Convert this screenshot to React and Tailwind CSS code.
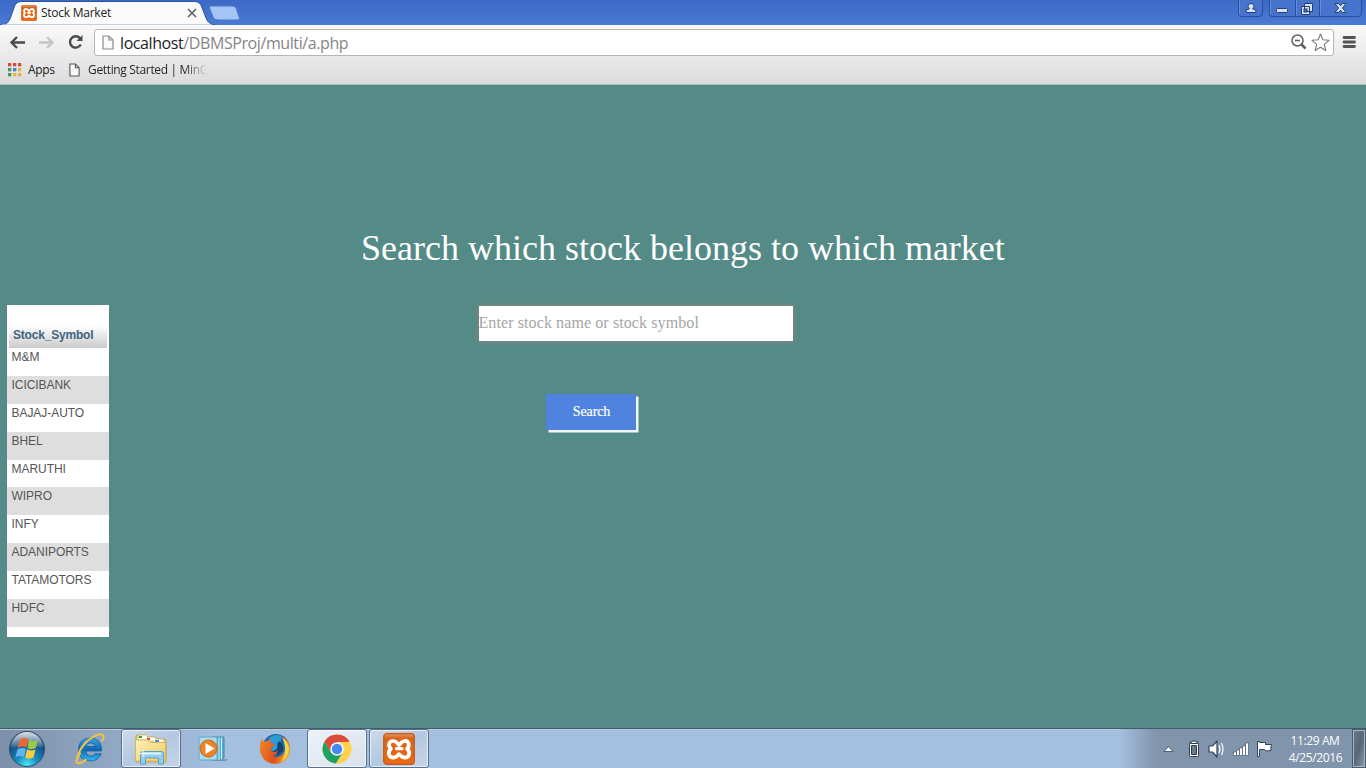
import React from 'react';

const symbols = ['M&M', 'ICICIBANK', 'BAJAJ-AUTO', 'BHEL', 'MARUTHI', 'WIPRO', 'INFY', 'ADANIPORTS', 'TATAMOTORS', 'HDFC'];

function XamppIcon({ className }) {
  return (
    <svg viewBox="0 0 32 32" className={className}>
      <defs>
        <linearGradient id="xampp" x1="0" y1="0" x2="0" y2="1">
          <stop offset="0" stopColor="#e89a62" />
          <stop offset="0.14" stopColor="#d9661d" />
          <stop offset="1" stopColor="#ea6a10" />
        </linearGradient>
      </defs>
      <rect x="0.7" y="0.7" width="30.6" height="30.6" rx="3" fill="url(#xampp)" stroke="#c45a18" strokeWidth="1.2" />
      <g fill="none" stroke="#fff" strokeWidth="3.7" strokeLinejoin="round" strokeLinecap="round">
        <path d="M11.500 8.200c-5.200-1.200-7.200 4.200-3.600 7.600-4 3.400-2 9.600 3.600 8.600 2.700-.5 3.200-2.300 4.600-3.300 1.200 1 1.900 2.800 4.600 3.300 5.400 1 7.400-5.200 3.400-8.600 3.400-3.400 1.400-8.800-3.400-7.600-2.500.5-3 2.500-4.600 4-1.400-1.500-2-3.400-4.600-4z" />
        <path d="M13.500 15.700h5.500" strokeWidth="3.200" />
      </g>
    </svg>
  );
}

function PageIcon({ stroke = '#555', className }) {
  return (
    <svg viewBox="0 0 12 15" className={className} fill="none" stroke={stroke} strokeWidth="1.2">
      <path d="M1 1h6l4 4v9H1z" fill="#fafafa" />
      <path d="M7 1v4h4" />
    </svg>
  );
}

function TabStrip() {
  return (
    <div className="relative flex h-[25px] bg-linear-to-b from-[#3c69c5] to-[#4a7ad3]">
      <svg className="absolute left-0 top-0" width="250" height="25">
        <path d="M0 25C6 25 8 23 10 19L15 5Q17 1.500 21 1.500H195Q199 1.500 201 5L206 18Q209 25 215 25Z" fill="#fafafa" stroke="#2c52a2" />
        <rect x="2" y="24.500" width="210" height="1" fill="#f6f6f6" />
        <path d="M210.500 6H232Q235 6 236 8L239.500 18Q240 20 237 20H218Q214.500 20 213.500 18L209.500 8Q209 6 211 6Z" fill="#a3c4f4" stroke="#4a78cc" />
      </svg>
      <div className="relative flex h-[25px] w-[204px] items-center pl-[21px]">
        <XamppIcon className="h-4 w-4" />
        <span className="ml-1 w-[142px] whitespace-nowrap text-[12px] tracking-[-0.25px] text-[#222]">Stock Market</span>
        <svg width="10" height="10" viewBox="0 0 10 10" className="ml-[4px]" stroke="#666" strokeWidth="1.700"><path d="M1 1l8 8M9 1L1 9" /></svg>
      </div>
      <svg className="ml-auto" width="130" height="18" viewBox="0 0 130 18">
        <g fill="#4674cd" stroke="#274d9c">
          <path d="M2.500-1V13q0 3.500 3 3.500H23q3.500 0 3.500-3.500V-1" />
          <path d="M33.500-1V13q0 3.500 3 3.500H112q3.500 0 3.500-3.500V-1" transform="translate(0 0)" />
          <path d="M33.500-1V13q0 3.500 3 3.500H122q3.500 0 3.500-3.500V-1M59.500 0V16M83.500 0V16" />
        </g>
        <g fill="none" stroke="#7398dd" strokeOpacity="0.700">
          <path d="M3.500 0V15M34.500 0V15M60.500 0V15M84.500 0V15" />
        </g>
        <g fill="#d5e2fa" stroke="#273f6d">
          <path d="M13.200 8.200q-1.200-1-1.200-2 0-2.700 3-2.700t3 2.700q0 1-1.200 2v.8l3 .8v2.700h-9.600V9.800l3-.8z" />
          <rect x="40.500" y="8.500" width="11" height="4" rx="1" />
          <path d="M68.500 3.500h8v8h-8zM65.500 6.500h8v8h-8z" />
          <rect x="68" y="9" width="3" height="3" fill="#4674cd" />
          <path d="M99 3.500h3.500l2 2.300 2-2.300h3.500l-3.500 4.500 3.500 4.500h-3.500l-2-2.300-2 2.300H99l3.500-4.500z" />
        </g>
      </svg>
    </div>
  );
}

function AppsGrid() {
  const colors = ['#d64a3c', '#d64a3c', '#d64a3c', '#3d9a5a', '#4a80da', '#e9b23c', '#3d9a5a', '#e9b23c', '#e9b23c'];
  return (
    <svg width="14" height="14" viewBox="0 0 14 14">
      {colors.map((c, i) => <rect key={i} x={(i % 3) * 5} y={Math.floor(i / 3) * 5} width="3.300" height="3.300" fill={c} />)}
    </svg>
  );
}

function Toolbar() {
  return (
    <div className="flex h-[60px] flex-col border-b border-[#b5bcb9] bg-linear-to-b from-[#f9f9f9] to-[#dcdcdc]">
      <div className="flex h-[34px] items-center pl-[9px]">
        <svg width="78" height="18" viewBox="0 0 78 18" fill="none">
          <path d="M16 9.500H2.500M8 4L2.500 9.500 8 15" stroke="#4b4b4b" strokeWidth="2.400" />
          <path d="M30 9.500h13.500M38 4l5.500 5.500L38 15" stroke="#c6c6c6" strokeWidth="2.400" />
          <path d="M71 5.200A5.700 5.700 0 1 0 71.800 11.500" stroke="#4b4b4b" strokeWidth="2.400" />
          <path d="M73.500 2v6h-6z" fill="#4b4b4b" />
        </svg>
        <div className="ml-[7px] flex h-[27px] w-[1240px] items-center rounded-[3px] border border-[#b6b6b6] bg-white pl-[7px]">
          <PageIcon stroke="#8c8c8c" className="h-[15px] w-[12px]" />
          <span className="ml-[6px] whitespace-nowrap pt-px text-[16px] tracking-[-0.41px] text-[#858585]"><span className="text-[#222]">localhost</span>/DBMSProj/multi/a.php</span>
          <svg className="ml-auto mr-[2px]" width="41" height="20" viewBox="0 0 41 20" fill="none">
            <circle cx="7.500" cy="8.500" r="5.500" stroke="#5f5f5f" strokeWidth="1.500" />
            <path d="M5 8.500h5" stroke="#5f5f5f" strokeWidth="1.500" />
            <path d="M11.500 12.500l4 4" stroke="#5f5f5f" strokeWidth="2.500" />
            <path d="M30.500 2l2.300 5.800 6.200.5-4.700 4.100 1.500 6.100-5.300-3.300-5.300 3.300 1.500-6.100-4.700-4.100 6.200-.5z" stroke="#777" strokeWidth="1.100" strokeLinejoin="round" />
          </svg>
        </div>
        <svg className="ml-[8px]" width="14" height="14" viewBox="0 0 14 14"><path d="M2 2.500h10.500M2 7h10.500M2 11.500h10.500" stroke="#555" strokeWidth="2.800" strokeLinecap="round" /></svg>
      </div>
      <div className="flex h-[22px] items-center pl-[8px] text-[12px] text-[#222]">
        <AppsGrid />
        <span className="ml-[6px] w-[41px] tracking-[-0.3px]">Apps</span>
        <PageIcon className="h-[14px] w-[11px]" />
        <span className="ml-[8px] w-[118px] overflow-hidden whitespace-nowrap bg-linear-to-r from-[#222] from-82% to-[#22222210] bg-clip-text tracking-[-0.34px] text-transparent">Getting Started | MinG</span>
      </div>
    </div>
  );
}

function StockList() {
  return (
    <aside className="mt-[220px] h-[332px] w-[102px] bg-white pt-[21px] font-['Liberation_Sans',sans-serif]">
      <div className="ml-[2px] mr-[2px] h-[22px] bg-linear-to-b from-white to-[#cbcbcb] pl-[4px] text-[12px] font-bold leading-[18px] tracking-[-0.2px] text-[#3d6480]">Stock_Symbol</div>
      {symbols.map((s, i) => (
        <div key={s} className={`h-[27.9px] pl-[4.500px] text-[12px] leading-[19px] tracking-[-0.05px] text-[#555] ${i % 2 ? 'bg-[#dedede]' : 'bg-white'}`}>{s}</div>
      ))}
    </aside>
  );
}

function StartOrb() {
  return (
    <svg width="38" height="38" viewBox="0 0 38 38">
      <defs>
        <radialGradient id="orb" cx="0.500" cy="0.950" r="0.900">
          <stop offset="0" stopColor="#4fe6f5" /><stop offset="0.350" stopColor="#168bc0" /><stop offset="0.750" stopColor="#154d80" /><stop offset="1" stopColor="#58748d" />
        </radialGradient>
        <linearGradient id="shine" x1="0" y1="0" x2="0" y2="1"><stop offset="0" stopColor="#fff" stopOpacity="0.750" /><stop offset="1" stopColor="#fff" stopOpacity="0.100" /></linearGradient>
      </defs>
      <circle cx="19" cy="19" r="17.500" fill="url(#orb)" stroke="#33506d" />
      <path d="M3 18a16 16 0 0 1 32 0q-16-5-32 0z" fill="url(#shine)" />
      <path d="M12 9.500q4-2.500 8.300-.5l-2 8.500q-4.300-2-8.500.5z" fill="#ed662b" />
      <path d="M21.500 9.800q4 2.500 8.500.3L27.800 18q-4.500 2.200-8.300-.1z" fill="#9acb45" />
      <path d="M9.500 19.500q4.200-2.500 8.400-.5l-2 8q-4.300-2-8.500.500z" fill="#64b5ed" />
      <path d="M19.200 19.300q4 2.300 8.300.2l-2 8q-4.400 2.200-8.400-.1z" fill="#fccc3d" />
    </svg>
  );
}

function IeIcon() {
  return (
    <svg width="34" height="34" viewBox="0 0 34 34" fill="none">
      <defs><linearGradient id="ie" x1="0" y1="0" x2="0" y2="1"><stop stopColor="#3fa4e4" /><stop offset="0.500" stopColor="#0c68b4" /><stop offset="1" stopColor="#35b7ef" /></linearGradient></defs>
      <path d="M29.500 19H14q.4 5 5 5 2.700 0 4.100-2.200h6.200Q26.300 29 18.400 29 6.500 28.500 6.500 17.500T18.500 6q11.500.5 11 13zM14 14.500h9.300q-.7-3.500-4.700-3.500T14 14.500z" fill="url(#ie)" stroke="#12589a" strokeWidth="0.700" />
      <path d="M8 21.500C1 32 5.500 34 13.500 28M5 26C8 15 17 5 27 2.500c5-1 5.500 2 3.300 6" stroke="#edc144" strokeWidth="2.200" strokeLinecap="round" />
    </svg>
  );
}

function ExplorerIcon() {
  return (
    <svg width="34" height="32" viewBox="0 0 34 32">
      <defs><linearGradient id="folder" x1="0" y1="0" x2="1" y2="1"><stop stopColor="#fff3b6" /><stop offset="1" stopColor="#ebc967" /></linearGradient></defs>
      <path d="M2 29V4q0-2 2-2h8l2 2h7l2 2h7q2 0 2 2v21z" fill="#ecd27d" stroke="#c4a44d" />
      <path d="M5 2.500h8v4H5z" fill="#fff" /><path d="M5 3h3v2H5z" fill="#29a244" />
      <path d="M12 4.500h9v3h-9z" fill="#fff" /><path d="M13 5h3v2h-3z" fill="#dd4939" />
      <path d="M20 6.500h9v3h-9z" fill="#fff" /><path d="M21 7h4v2h-4z" fill="#3c91da" />
      <path d="M1.500 7h12l3 2.500h15V28h-30z" fill="url(#folder)" stroke="#d3b65f" />
      <path d="M6.500 31V20.500q0-2 2-2h19q2 0 2 2V31h-5v-6h-13v6z" fill="#96cdec" stroke="#5a9fc8" />
      <path d="M9 20.500h18" stroke="#dff5ff" strokeWidth="2" />
      <path d="M9 17v7M5.500 20.500h7" stroke="#fff" />
    </svg>
  );
}

function MediaIcon() {
  return (
    <svg width="31" height="28" viewBox="0 0 31 28">
      <path d="M15 25l15-1-2 2H16z" fill="#7897b9" />
      <path d="M14 2h12v21l-3 2H14z" fill="#59acd1" stroke="#4289af" />
      <path d="M21 2.500V25M23.500 2.500v22" stroke="#cef0fa" />
      <path d="M1 2h18v23H1z" fill="#a8dbec" stroke="#65a7c4" />
      <circle cx="10.500" cy="13.500" r="8.500" fill="#ef8222" stroke="#c9651a" />
      <path d="M7.500 8l9 5.500-9 5.500z" fill="#fff" />
    </svg>
  );
}

function FirefoxIcon() {
  return (
    <svg width="32" height="32" viewBox="0 0 32 32">
      <defs><linearGradient id="fox" x1="0" y1="0.300" x2="1" y2="0.700"><stop stopColor="#ee8426" /><stop offset="0.600" stopColor="#dd4f1c" /><stop offset="1" stopColor="#f4b62d" /></linearGradient></defs>
      <circle cx="17" cy="14.500" r="13.500" fill="#1d65ad" />
      <path d="M10 5q5-5 13-2l-2 7 2 6-7 5-6-7z" fill="#299bd7" />
      <path d="M19 8q6 2 5 10l-5 4-6-3 5-3z" fill="#15406f" />
      <path d="M3.500 4q-.5 3 1 5L8 8q3-2 5-2-2 2-1.500 4l4 1q.5 2-3 3.500-1.500 3 1.500 4.500 3 0 5-1.500-1 5-6 5 6 3.500 11-1.500 4-5 1-13-1-3-3-5 8 3 9 12Q31 29 17 31 5 31 1.500 20-.5 11 3.500 4z" fill="url(#fox)" />
      <path d="M23 4.500q6 3 7 11-1 10-8 13 5-6 4-14-.5-6-3-10z" fill="#f8d449" />
    </svg>
  );
}

function ChromeIcon() {
  return (
    <svg width="30" height="30" viewBox="0 0 30 30">
      <circle cx="15" cy="15" r="14.500" fill="#ffd34f" />
      <path d="M2.440 7.750A14.500 14.500 0 0 1 27.560 7.750L15 8.200Q10.500 8.200 9.100 18.400z" fill="#db4c3f" />
      <path d="M2.440 7.750A14.500 14.500 0 0 0 14 29.500L20.900 18.400Q14 23 9.100 18.400z" fill="#1da263" />
      <path d="M27.600 8H15v7l5.900 3.400L14 29.500A14.500 14.500 0 0 0 27.600 8z" fill="#ffd34f" />
      <circle cx="15" cy="15" r="6.800" fill="#f4f7fb" />
      <circle cx="15" cy="15" r="5.200" fill="#4589f5" />
    </svg>
  );
}

function TaskSlot({ active, children }) {
  return (
    <div className={`flex h-[39px] w-[60px] items-center justify-center rounded-[3px] border border-[#566f8d] shadow-[inset_0_0_0_1px_#ffffffa0] ${active ? 'bg-linear-to-br from-[#edf2f8] to-[#d7e1ed]' : 'bg-linear-to-br from-[#cddaea] via-[#b3c8e1] to-[#c5d5e8]'}`}>{children}</div>
  );
}

function Taskbar() {
  return (
    <footer className="flex h-10 items-stretch border-t border-[#465a6c] bg-linear-to-r from-[#7c90a9] from-0% via-[#a5bfdf] via-16% to-[#a5bfdf] shadow-[inset_0_1px_0_#b9cada]">
      <div className="flex w-[53px] items-center pl-[8px]"><StartOrb /></div>
      <div className="flex w-[68px] items-center pl-[19px]"><IeIcon /></div>
      <TaskSlot><ExplorerIcon /></TaskSlot>
      <div className="flex w-[64px] items-center justify-center"><MediaIcon /></div>
      <div className="flex w-[62px] items-center justify-center pr-[2px]"><FirefoxIcon /></div>
      <TaskSlot active><ChromeIcon /></TaskSlot>
      <div className="ml-[2px] flex"><TaskSlot><XamppIcon className="h-8 w-8" /></TaskSlot></div>
      <div className="ml-auto flex w-[246px] bg-linear-to-r from-[#a5bfdf] to-[#8094ab] to-15%">
        <svg width="160" height="39" viewBox="0 0 160 39" fill="none" stroke="#30445a" strokeLinejoin="round">
          <path d="M44 22.500l4.500-5 4.500 5z" fill="#fff" strokeWidth="0.800" />
          <g stroke="#303c49"><path d="M70 15v-2h2v-1h4v1h2v2" fill="#fff" /><rect x="69.500" y="14.500" width="9" height="13" rx="1" fill="#fff" /><rect x="71.500" y="16.500" width="5" height="9" fill="#65798f" /></g>
          <path d="M89 17h3.500l4.500-5v16l-4.500-5H89z" fill="#fff" strokeWidth="1.200" />
          <path d="M99 16q2 4 0 8M101.500 14q3 6 0 12" stroke="#fff" strokeWidth="1.200" />
          <g fill="#fff" strokeWidth="0.600"><rect x="113.500" y="23" width="3" height="3.500" /><rect x="116.500" y="21" width="3" height="5.500" /><rect x="119.500" y="19" width="3" height="7.500" /><rect x="122.500" y="17" width="3" height="9.500" /><rect x="125.500" y="14" width="3" height="12.500" /></g>
          <path d="M137.500 12.500h2v1h6v2h6q-1 2-.5 6l-5 .5-1.500-1.500h-5v7h-2z" fill="#fff" />
        </svg>
        <div className="flex w-[70px] flex-col items-center pt-[3px] text-[12px] leading-[17px] tracking-[-0.38px] text-white">
          <span>11:29 AM</span><span className="pl-px">4/25/2016</span>
        </div>
        <div className="ml-auto w-[14px] border border-[#465b72] bg-linear-to-br from-[#68798c] via-[#576777] to-[#8c9cad] shadow-[inset_0_0_0_1px_#a9b7c5]" />
      </div>
    </footer>
  );
}

export default function App() {
  return (
    <div className="flex h-[768px] w-[1366px] flex-col overflow-hidden font-['Open_Sans','Noto_Sans',sans-serif]">
      <TabStrip />
      <Toolbar />
      <main className="flex h-[643px] bg-[#558b87] pl-[7px] font-['Liberation_Serif',serif]">
        <StockList />
        <section className="flex flex-1 flex-col">
          <h1 className="ml-[252px] mt-[142px] whitespace-nowrap text-[36px] leading-[42px] text-white">Search which stock belongs to which market</h1>
          <input aria-label="Stock" placeholder="Enter stock name or stock symbol" className="ml-[369.5px] mt-[37px] h-[35px] w-[314.5px] bg-white pb-px text-[16px] tracking-[0.1px] shadow-[0_0_5px_#a17f7a] outline-none placeholder:text-[#a5a5a5]" />
          <button className="ml-[437px] mt-[53px] h-[36px] w-[90px] bg-[#5082e0] pb-[2px] pl-[1px] text-[14px] tracking-[-0.1px] text-white [-webkit-text-stroke:0.2px_white] shadow-[2.5px_2.5px_0_#f2f7f7]">Search</button>
        </section>
      </main>
      <Taskbar />
    </div>
  );
}
